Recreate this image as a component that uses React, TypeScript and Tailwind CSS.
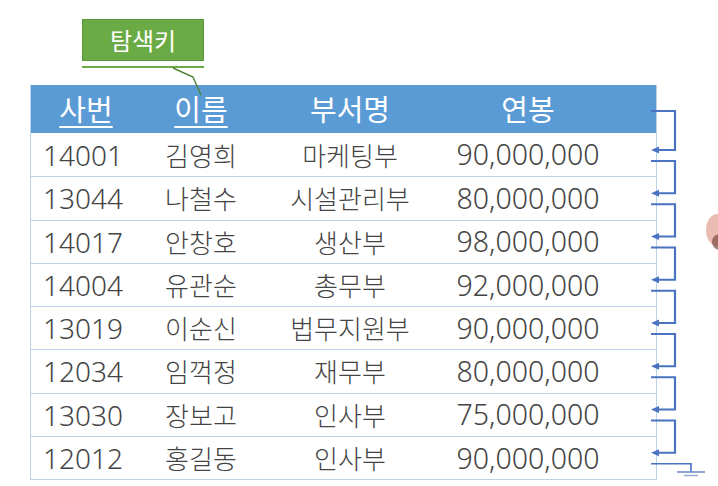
import React from "react";

const rows = [
  ["14001", "김영희", "마케팅부", "90,000,000"],
  ["13044", "나철수", "시설관리부", "80,000,000"],
  ["14017", "안창호", "생산부", "98,000,000"],
  ["14004", "유관순", "총무부", "92,000,000"],
  ["13019", "이순신", "법무지원부", "90,000,000"],
  ["12034", "임꺽정", "재무부", "80,000,000"],
  ["13030", "장보고", "인사부", "75,000,000"],
  ["12012", "홍길동", "인사부", "90,000,000"],
];

const KR = { fontFamily: '"Noto Sans CJK KR", "Noto Sans", sans-serif' };
const NUM = { fontFamily: '"Noto Sans", "Noto Sans CJK KR", sans-serif' };

function Overlay() {
  const blue = "#4a73c0";
  const rowTop = (i: number) => 134 + 43.25 * i;
  const segs: React.ReactNode[] = [];
  let yOut = 111;
  for (let i = 0; i < 8; i++) {
    const yIn = rowTop(i) + 16;
    segs.push(
      <polyline
        key={"p" + i}
        points={`651,${yOut} 675,${yOut} 675,${yIn} 658,${yIn}`}
        fill="none"
        stroke={blue}
        strokeWidth={2.2}
      />
    );
    segs.push(
      <polygon key={"a" + i} points={`651,${yIn} 659,${yIn - 3.5} 659,${yIn + 3.5}`} fill={blue} />
    );
    yOut = rowTop(i) + 27;
  }
  const yg = rowTop(7) + 27;
  return (
    <svg className="absolute left-0 top-0 pointer-events-none" width={718} height={486}>
      {segs}
      <polyline points={`651,${yg} 691,${yg} 691,472`} fill="none" stroke={blue} strokeWidth={1.6} />
      <line x1={677} y1={472} x2={705} y2={472} stroke="#6f8fc8" strokeWidth={1.6} />
      <line x1={684} y1={475.5} x2={698} y2={475.5} stroke="#8fa6d0" strokeWidth={1.4} />
      <polyline points="173,68 193,77 201,95" fill="none" stroke="#4f7f33" strokeWidth={1.4} />
      <ellipse cx={717} cy={230} rx={11} ry={16} fill="#ebbdb2" />
      <ellipse cx={720} cy={242} rx={8} ry={8} fill="#7a4a44" opacity={0.7} />
    </svg>
  );
}

export default function App() {
  return (
    <div className="relative w-[718px] h-[486px] bg-white overflow-hidden">
      <div className="pt-[19px] pl-[82px]">
        <div
          className="w-[122px] h-[42px] bg-[#6aab45] border border-[#5a9638] flex items-center justify-center text-white text-[24px] leading-none"
          style={KR}
        >
          탐색키
        </div>
        <div className="w-[122px] h-[2px] bg-[#6aab45] mt-[5px]" />
      </div>
      <div className="ml-[30px] mt-[17px] w-[627px] border-x border-b border-[#b9d3ea]">
        <div className="grid grid-cols-[110px_120px_178px_178px_40px] h-[48px] bg-[#5b9bd5] text-white text-[29px] items-center" style={KR}>
          <div className="text-center"><span className="underline decoration-[2px] underline-offset-[5px]">사번</span></div>
          <div className="text-center"><span className="underline decoration-[2px] underline-offset-[5px]">이름</span></div>
          <div className="text-center">부서명</div>
          <div className="text-center">연봉</div>
          <div />
        </div>
        {rows.map((r, i) => (
          <div
            key={i}
            className={`grid grid-cols-[110px_120px_178px_178px_40px] h-[43.25px] items-center text-[#444444] font-light ${i > 0 ? "border-t border-[#b9d3ea]" : ""}`}
          >
            <div className="pl-[12px] text-[28px] leading-none" style={NUM}>{r[0]}</div>
            <div className="text-center text-[26px] leading-none" style={KR}>{r[1]}</div>
            <div className="text-center text-[26px] leading-none" style={KR}>{r[2]}</div>
            <div className="text-center text-[28.5px] leading-none" style={NUM}>{r[3]}</div>
            <div />
          </div>
        ))}
      </div>
      <Overlay />
    </div>
  );
}
